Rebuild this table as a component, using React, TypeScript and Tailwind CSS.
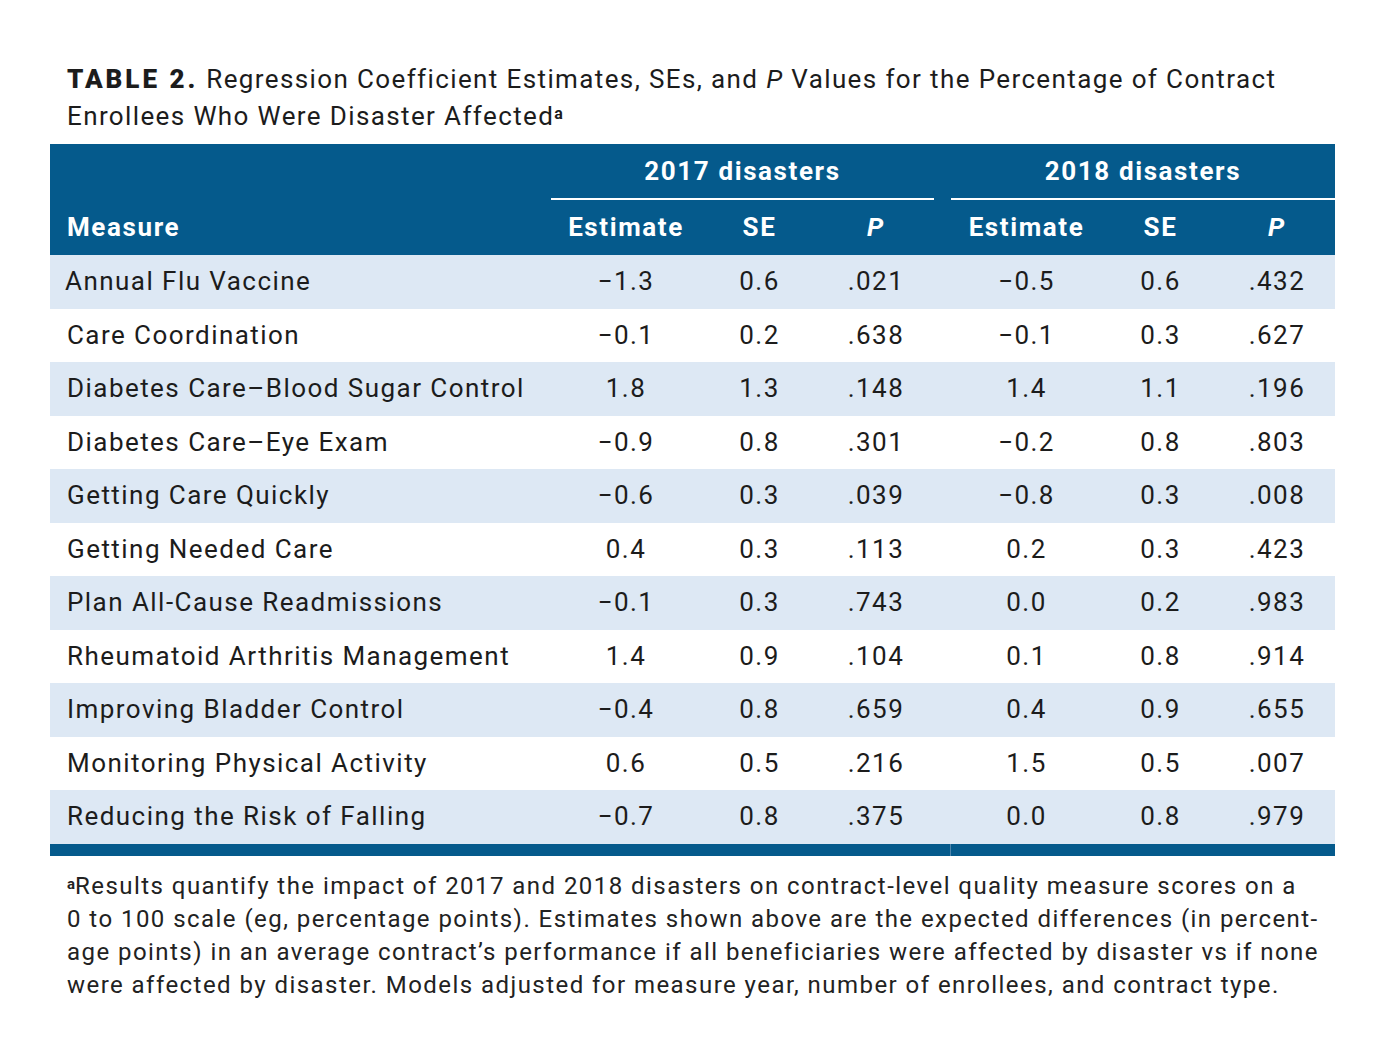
const rows: [string, string, string, string, string, string, string][] = [
  ['Annual Flu Vaccine', '\u22121.3', '0.6', '.021', '\u22120.5', '0.6', '.432'],
  ['Care Coordination', '\u22120.1', '0.2', '.638', '\u22120.1', '0.3', '.627'],
  ['Diabetes Care\u2013Blood Sugar Control', '1.8', '1.3', '.148', '1.4', '1.1', '.196'],
  ['Diabetes Care\u2013Eye Exam', '\u22120.9', '0.8', '.301', '\u22120.2', '0.8', '.803'],
  ['Getting Care Quickly', '\u22120.6', '0.3', '.039', '\u22120.8', '0.3', '.008'],
  ['Getting Needed Care', '0.4', '0.3', '.113', '0.2', '0.3', '.423'],
  ['Plan All-Cause Readmissions', '\u22120.1', '0.3', '.743', '0.0', '0.2', '.983'],
  ['Rheumatoid Arthritis Management', '1.4', '0.9', '.104', '0.1', '0.8', '.914'],
  ['Improving Bladder Control', '\u22120.4', '0.8', '.659', '0.4', '0.9', '.655'],
  ['Monitoring Physical Activity', '0.6', '0.5', '.216', '1.5', '0.5', '.007'],
  ['Reducing the Risk of Falling', '\u22120.7', '0.8', '.375', '0.0', '0.8', '.979'],
];

const grid = 'grid grid-cols-[501px_150px_117px_116px_17px_151px_117px_116px]';

export default function App() {
  return (
    <div className="w-[1386px] h-[1062px] bg-white font-['Roboto',sans-serif] text-[#1c1c1c] tracking-[1.45px]">
      <div className="pt-[61px] pl-[67px] pr-[20px] text-[26px] leading-[37px] whitespace-nowrap tracking-[1.38px]">
        <span className="font-black tracking-[3px]">TABLE 2.</span> Regression Coefficient Estimates, SEs, and <i>P</i> Values for the Percentage of Contract
        <br />
        Enrollees Who Were Disaster Affected<sup className="text-[16px] font-bold relative -top-[6px] tracking-normal">a</sup>
      </div>

      <div className="ml-[50px] mt-[9px] w-[1285px]">
        {/* Header */}
        <div className="bg-[#055a8c] text-white font-bold text-[26px] tracking-[1.6px]">
          <div className={`${grid} h-[56px]`}>
            <div />
            <div className="col-span-3 flex flex-col">
              <div className="flex-1 flex items-center justify-center">2017 disasters</div>
              <div className="h-[2px] bg-white" />
            </div>
            <div />
            <div className="col-span-3 flex flex-col">
              <div className="flex-1 flex items-center justify-center">2018 disasters</div>
              <div className="h-[2px] bg-white" />
            </div>
          </div>
          <div className={`${grid} h-[55px] items-center`}>
            <div className="pl-[17px]">Measure</div>
            <div className="text-center">Estimate</div>
            <div className="text-center">SE</div>
            <div className="text-center italic">P</div>
            <div />
            <div className="text-center">Estimate</div>
            <div className="text-center">SE</div>
            <div className="text-center italic">P</div>
          </div>
        </div>

        {/* Body */}
        {rows.map((r, i) => (
          <div
            key={r[0]}
            className={`${grid} h-[53.5px] items-center text-[26px] ${i % 2 === 0 ? 'bg-[#dde8f4]' : 'bg-white'}`}
          >
            <div className={i === 0 ? 'pl-[15px]' : 'pl-[17px]'}>{r[0]}</div>
            <div className="text-center">{r[1]}</div>
            <div className="text-center">{r[2]}</div>
            <div className="text-center">{r[3]}</div>
            <div />
            <div className="text-center">{r[4]}</div>
            <div className="text-center">{r[5]}</div>
            <div className="text-center">{r[6]}</div>
          </div>
        ))}

        {/* Bottom bar */}
        <div className="h-[12px] bg-[#055a8c] flex">
          <div className="w-[900px]" />
          <div className="w-px bg-[#4f86ad]" />
        </div>
      </div>

      <div className="pl-[67px] pr-[20px] mt-[14px] text-[24px] leading-[33.3px] text-[#222] whitespace-nowrap">
        <sup className="text-[15px] font-bold relative -top-[5px] tracking-normal">a</sup>Results quantify the impact of 2017 and 2018 disasters on contract-level quality measure scores on a
        <br />
        0 to 100 scale (eg, percentage points). Estimates shown above are the expected differences (in percent-
        <br />
        age points) in an average contract’s performance if all beneficiaries were affected by disaster vs if none
        <br />
        were affected by disaster. Models adjusted for measure year, number of enrollees, and contract type.
      </div>
    </div>
  );
}
